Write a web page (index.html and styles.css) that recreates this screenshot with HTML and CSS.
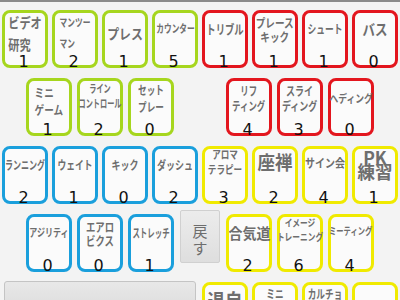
FILE: index.html
```html
<!DOCTYPE html>
<html lang="ja">
<head>
<meta charset="utf-8">
<link rel="stylesheet" href="styles.css">
</head>
<body>
<div class="bar"></div>
<div class="rows">
  <div class="row">
    <div class="half">
      <div class="b g"><div class="l tall"><span class="left s-video">ビデオ<br>研究</span></div><div class="n">1</div></div>
      <div class="b g"><div class="l tall"><span class="left s-man">マンツー<br>マン</span></div><div class="n">2</div></div>
      <div class="b g"><div class="l tall"><span class="s-press">プレス</span></div><div class="n">1</div></div>
      <div class="b g"><div class="l"><span class="s-counter">カウンター</span></div><div class="n">5</div></div>
    </div>
    <div class="half">
      <div class="b r"><div class="l"><span class="s-dribble">トリブル</span></div><div class="n">1</div></div>
      <div class="b r"><div class="l mid"><span class="s-pk2">プレース<br>キック</span></div><div class="n">1</div></div>
      <div class="b r"><div class="l"><span class="s-shoot">シュート</span></div><div class="n">1</div></div>
      <div class="b r"><div class="l"><span class="s-pass">バス</span></div><div class="n">0</div></div>
    </div>
  </div>
  <div class="row">
    <div class="half c">
      <div class="b g"><div class="l tall"><span class="left s-mini">ミニ<br>ゲーム</span></div><div class="n">1</div></div>
      <div class="b g"><div class="l"><span class="s-line">ライン<br>コントロール</span></div><div class="n">2</div></div>
      <div class="b g"><div class="l mid"><span class="s-set">セット<br>プレー</span></div><div class="n">0</div></div>
    </div>
    <div class="half c">
      <div class="b r"><div class="l mid"><span class="s-lift">リフ<br>ティング</span></div><div class="n">4</div></div>
      <div class="b r"><div class="l mid"><span class="s-slide">スライ<br>ディング</span></div><div class="n">3</div></div>
      <div class="b r"><div class="l mid"><span class="s-head">ヘディング</span></div><div class="n">0</div></div>
    </div>
  </div>
  <div class="row">
    <div class="half">
      <div class="b bl"><div class="l"><span class="s-run">ランニング</span></div><div class="n">2</div></div>
      <div class="b bl"><div class="l"><span class="s-weight">ウェイト</span></div><div class="n">1</div></div>
      <div class="b bl"><div class="l"><span class="s-kick">キック</span></div><div class="n">0</div></div>
      <div class="b bl"><div class="l"><span class="s-dash">ダッシュ</span></div><div class="n">2</div></div>
    </div>
    <div class="half">
      <div class="b y"><div class="l up"><span class="s-aroma">アロマ<br>テラピー</span></div><div class="n">3</div></div>
      <div class="b y"><div class="l up"><span class="s-zazen">座禅</span></div><div class="n">2</div></div>
      <div class="b y"><div class="l up"><span class="s-sign">サイン会</span></div><div class="n">4</div></div>
      <div class="b y"><div class="l"><span class="s-pkp">PK<br>練習</span></div><div class="n">1</div></div>
    </div>
  </div>
  <div class="row r4">
    <div class="grp">
      <div class="b bl"><div class="l"><span class="s-agi">アジリティ</span></div><div class="n">0</div></div>
      <div class="b bl"><div class="l mid"><span class="s-aero">エアロ<br>ビクス</span></div><div class="n">0</div></div>
      <div class="b bl"><div class="l"><span class="s-stretch">ストレッチ</span></div><div class="n">1</div></div>
    </div>
    <div class="back">戻<br>す</div>
    <div class="grp">
      <div class="b y"><div class="l"><span class="s-aiki">合気道</span></div><div class="n">2</div></div>
      <div class="b y"><div class="l up"><span class="s-image">イメージ<br>トレーニング</span></div><div class="n">6</div></div>
      <div class="b y"><div class="l up"><span class="s-meet">ミーティング</span></div><div class="n">4</div></div>
    </div>
  </div>
  <div class="row">
    <div class="half">
      <div class="wide"></div>
    </div>
    <div class="half">
      <div class="b y"><div class="l"><span class="s-zazen">退自</span></div><div class="n">1</div></div>
      <div class="b y"><div class="l mid"><span class="s-set">ミニ<br>合宿</span></div><div class="n">1</div></div>
      <div class="b y"><div class="l mid"><span class="s-set">カルチョ<br>ビオ</span></div><div class="n">1</div></div>
      <div class="b y"><div class="l tall"><span class="s-shoot">ケガ予防</span></div><div class="n">1</div></div>
    </div>
  </div>
</div>
</body>
</html>
```

FILE: styles.css
```css
html, body {
  margin: 0;
  padding: 0;
}
body {
  width: 400px;
  height: 300px;
  overflow: hidden;
  background: #f3f3f3;
  font-family: "Noto Sans CJK JP", sans-serif;
}
.bar {
  height: 2px;
  background: #8a8a8a;
}
.rows {
  display: flex;
  flex-direction: column;
  gap: 10px;
  padding-top: 8px;
}
.row {
  display: flex;
  height: 58px;
  flex: none;
}
.half {
  width: 200px;
  box-sizing: border-box;
  display: flex;
  gap: 4px;
  padding: 0 2px;
}
.half.c {
  justify-content: center;
  gap: 5px;
  padding: 0;
}
.r4 {
  padding-left: 26px;
}
.grp {
  display: flex;
  gap: 5px;
}
.b {
  width: 46px;
  height: 58px;
  box-sizing: border-box;
  border: 3px solid;
  border-radius: 8px;
  background: #fbfbfb;
  display: flex;
  flex-direction: column;
  flex: none;
}
.g { border-color: #a6d61e; }
.r { border-color: #e3161e; }
.bl { border-color: #1a9fdc; }
.y { border-color: #f0ea00; }

.l {
  height: 30px;
  display: flex;
  align-items: center;
  justify-content: center;
  white-space: nowrap;
  color: #6e6e6e;
  font-weight: 700;
  flex: none;
}
.l.mid { height: 34px; }
.l.tall { height: 40px; }
.l.up { height: 26px; }
.l span {
  display: inline-block;
  text-align: center;
  font-size: 12px;
  line-height: 15px;
  transform: scaleX(var(--sx, 0.75));
}
.l span.left { text-align: left; }

.s-video { font-size: 14px !important; line-height: 22px !important; --sx: 0.8; }
.s-man { font-size: 11px !important; line-height: 21px !important; --sx: 0.7; }
.s-press { font-size: 14px !important; --sx: 0.85; }
.s-counter { font-size: 11px !important; --sx: 0.7; }
.s-dribble { font-size: 13px !important; --sx: 0.72; }
.s-pk2 { font-size: 12px !important; line-height: 14px !important; --sx: 0.8; }
.s-shoot { font-size: 12px !important; --sx: 0.73; }
.s-pass { font-size: 15px !important; --sx: 0.83; }
.s-mini { font-size: 12px !important; line-height: 17px !important; --sx: 0.8; }
.s-line { font-size: 11px !important; line-height: 15px !important; --sx: 0.65; }
.s-set { font-size: 12px !important; line-height: 17px !important; --sx: 0.72; }
.s-lift { font-size: 12px !important; line-height: 15px !important; --sx: 0.7; }
.s-slide { font-size: 12px !important; line-height: 15px !important; --sx: 0.75; }
.s-head { font-size: 11px !important; --sx: 0.8; }
.s-run { font-size: 12px !important; --sx: 0.67; }
.s-weight { font-size: 12px !important; --sx: 0.73; }
.s-kick { font-size: 12px !important; --sx: 0.75; }
.s-dash { font-size: 12px !important; --sx: 0.75; }
.s-aroma { font-size: 11px !important; line-height: 15px !important; --sx: 0.78; }
.s-zazen { font-size: 19px !important; line-height: 20px !important; --sx: 0.92; }
.s-sign { font-size: 12px !important; --sx: 0.83; }
.s-pkp { font-size: 18px !important; line-height: 14px !important; --sx: 0.97; }
.s-agi { font-size: 11px !important; --sx: 0.73; }
.s-aero { font-size: 12px !important; line-height: 14px !important; --sx: 0.78; }
.s-stretch { font-size: 12px !important; --sx: 0.62; }
.s-aiki { font-size: 15px !important; --sx: 0.93; }
.s-image { font-size: 10px !important; line-height: 14px !important; --sx: 0.77; }
.s-meet { font-size: 10px !important; --sx: 0.73; }

.n {
  margin-top: auto;
  margin-bottom: -5px;
  font-family: "DejaVu Sans", sans-serif;
  font-size: 16px;
  line-height: 16px;
  color: #111;
  text-align: center;
  padding-right: 3px;
}

.back {
  width: 40px;
  height: 53px;
  box-sizing: border-box;
  margin: -4px 6px 0 6px;
  flex: none;
  border: 1px solid #d0d0d0;
  border-radius: 2px;
  background: linear-gradient(#ececec, #dedede);
  color: #6d6d6d;
  font-size: 15px;
  line-height: 17px;
  text-align: center;
  padding-top: 11px;
}

.wide {
  width: 192px;
  height: 40px;
  margin-left: 2px;
  margin-top: -1px;
  box-sizing: border-box;
  border: 1px solid #c4c4c4;
  border-radius: 3px;
  background: linear-gradient(#e8e8e8, #d9d9d9);
}
```
